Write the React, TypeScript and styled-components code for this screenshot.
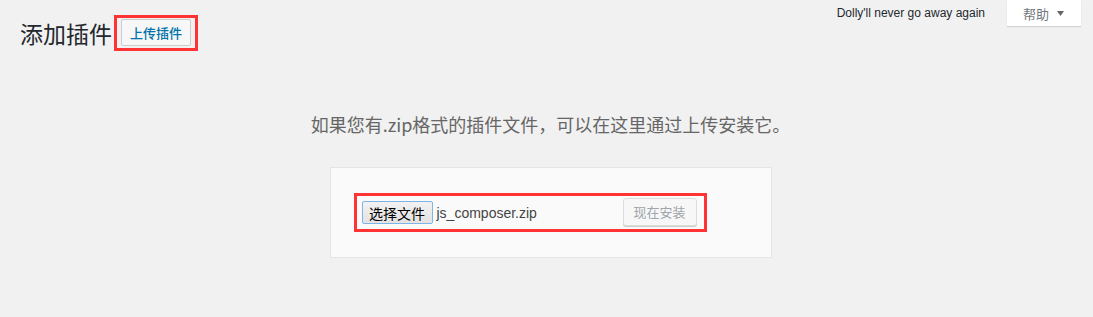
import styled, { createGlobalStyle } from 'styled-components';

const GlobalStyle = createGlobalStyle`
  body {
    margin: 0;
    background: #f1f1f1;
    font-family: "Liberation Sans", "Noto Sans CJK SC", sans-serif;
    color: #444;
  }
`;

const Page = styled.div`
  padding: 0 12px 0 20px;
`;

const TopRow = styled.div`
  display: flex;
  justify-content: space-between;
  align-items: flex-start;
`;

const Title = styled.h1`
  display: flex;
  align-items: center;
  margin: 15px 0 0;
  font-family: "Noto Sans CJK SC", sans-serif;
  font-size: 23px;
  font-weight: 400;
  line-height: 29px;
  color: #23282d;
`;

const Marker = styled.span<{ $pad: string }>`
  display: inline-flex;
  align-items: center;
  border: 3px solid #f33;
  padding: ${(p) => p.$pad};
`;

const TitleAction = styled.a`
  display: inline-block;
  padding: 4px 8px;
  border: 1px solid #ccc;
  border-radius: 2px;
  background: #f7f7f7;
  color: #0073aa;
  font-family: "Noto Sans CJK SC", sans-serif;
  font-size: 13px;
  font-weight: 500;
  line-height: 17px;
  text-decoration: none;
`;

const ScreenMeta = styled.div`
  display: flex;
  align-items: flex-start;
`;

const Dolly = styled.p`
  margin: 0 22px 0 0;
  padding-top: 3px;
  font-size: 12px;
  line-height: 20px;
  color: #23282d;
`;

const HelpTab = styled.button`
  display: flex;
  align-items: center;
  gap: 8px;
  width: 74px;
  height: 26px;
  padding: 0 0 0 16px;
  border: 0;
  background: #fff;
  box-shadow: 0 1px 1px rgba(0, 0, 0, 0.12);
  color: #72777c;
  font-family: "Noto Sans CJK SC", sans-serif;
  font-size: 13px;
`;

const InstallHelp = styled.p`
  margin: 60px 0 0;
  text-align: center;
  font-family: "Noto Sans CJK SC", sans-serif;
  font-size: 18px;
  line-height: 27px;
  color: #666;
`;

const UploadCard = styled.form`
  box-sizing: border-box;
  width: 442px;
  margin: 29px auto 0;
  padding: 25px 23px 25px;
  background: #fafafa;
  border: 1px solid #e5e5e5;
`;

const FileField = styled.div`
  display: flex;
  align-items: center;
  gap: 4px;
  width: 258px;
  margin-right: 3px;
`;

const FileButton = styled.span`
  box-sizing: border-box;
  display: inline-flex;
  align-items: center;
  justify-content: center;
  width: 71px;
  height: 23px;
  border: 1px solid #7eb4ea;
  border-radius: 2px;
  background: linear-gradient(#f2f2f2, #e3e3e3);
  color: #000;
  font-family: "Noto Sans CJK SC", sans-serif;
  font-size: 14px;
`;

const FileName = styled.span`
  font-size: 14px;
  color: #444;
`;

const InstallButton = styled.button`
  box-sizing: border-box;
  height: 28px;
  width: 74px;
  padding: 0 10px 1px;
  margin-bottom: 1px;
  border: 1px solid #ddd;
  border-radius: 3px;
  background: #f7f7f7;
  box-shadow: 0 1px 0 #ccc;
  color: #a0a5aa;
  font-family: "Noto Sans CJK SC", sans-serif;
  font-size: 13px;
`;

export default function App() {
  return (
    <>
      <GlobalStyle />
      <Page>
        <TopRow>
          <Title>
            添加插件
            <Marker $pad="1px 4px 2px 4px" style={{ marginLeft: 2 }}>
              <TitleAction href="#">上传插件</TitleAction>
            </Marker>
          </Title>
          <ScreenMeta>
            <Dolly>Dolly'll never go away again</Dolly>
            <HelpTab>
              帮助
              <svg width="7" height="5" viewBox="0 0 7 5">
                <path d="M0 0h7L3.5 5z" fill="#666" />
              </svg>
            </HelpTab>
          </ScreenMeta>
        </TopRow>
        <InstallHelp>如果您有.zip格式的插件文件，可以在这里通过上传安装它。</InstallHelp>
        <UploadCard onSubmit={(e) => e.preventDefault()}>
          <Marker $pad="2px 7px 2px 5px">
            <FileField>
              <FileButton>选择文件</FileButton>
              <FileName>js_composer.zip</FileName>
            </FileField>
            <InstallButton type="submit" disabled>
              现在安装
            </InstallButton>
          </Marker>
        </UploadCard>
      </Page>
    </>
  );
}
